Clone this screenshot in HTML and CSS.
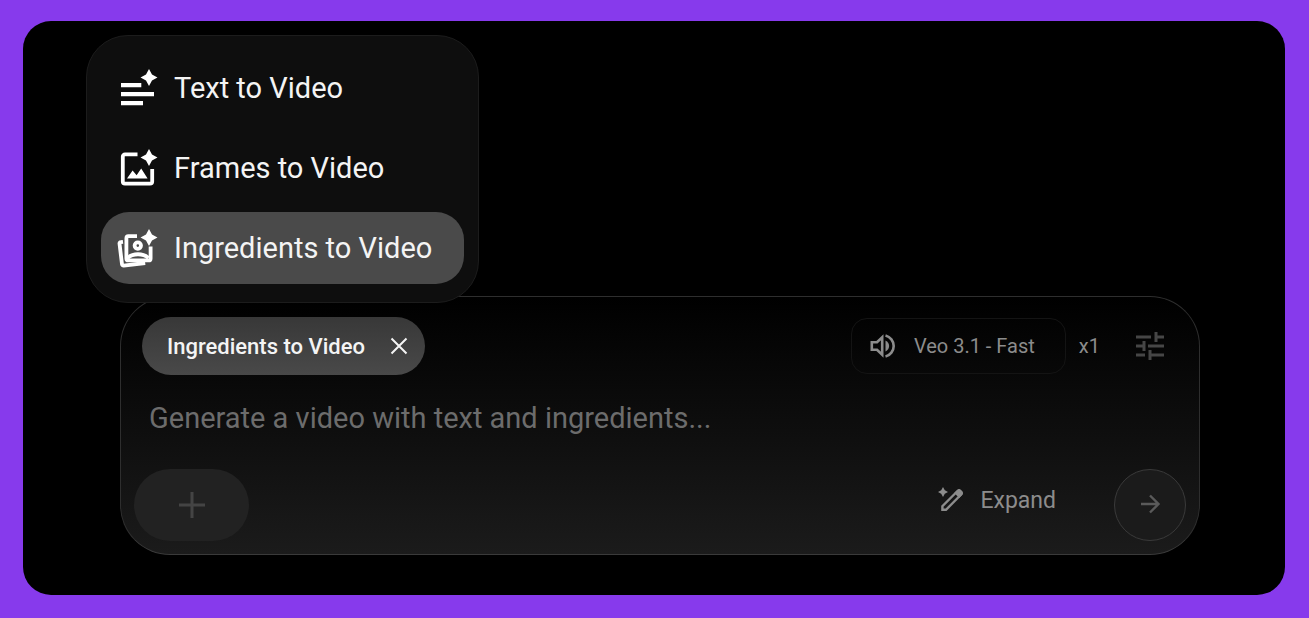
FILE: index.html
```
<!DOCTYPE html>
<html lang="en">
<head>
    <meta charset="utf-8">
    <meta name="viewport" content="width=device-width, initial-scale=1">
    <title>Ingredients to Video</title>
    <link rel="stylesheet" href="styles.css">
</head>
<body>
<main class="stage">
    <form class="composer">
        <!-- mode menu, opens over the top edge of the composer -->
        <div class="menu" role="menu">
            <button type="button" class="menu-item" role="menuitem">
                <svg class="menu-icon" viewBox="0 0 40 40" aria-hidden="true">
                    <path d="M4 15h20.300v4.200H4zM4 24h33v4.200H4zM4 33h22v4.200H4z"/>
                    <path d="M32 1l3 5.500 5.500 3-5.500 3L32 18l-3-5.500-5.500-3 5.500-3z"/>
                </svg>
                Text to Video
            </button>
            <button type="button" class="menu-item" role="menuitem">
                <svg class="menu-icon" viewBox="0 0 40 40" aria-hidden="true">
                    <path class="line" d="M20.500 6.400H8a2.200 2.200 0 0 0-2.200 2.200v24.800A2.200 2.200 0 0 0 8 35.600h25a2.200 2.200 0 0 0 2.200-2.200V21"/>
                    <path d="M10 30.400l5.600-8 4 4.800 4.600-6.600 6.400 9.800z"/>
                    <path d="M32 1l3 5.500 5.500 3-5.500 3L32 18l-3-5.500-5.500-3 5.500-3z"/>
                </svg>
                Frames to Video
            </button>
            <button type="button" class="menu-item selected" role="menuitem">
                <svg class="menu-icon" viewBox="0 0 40 40" aria-hidden="true">
                    <path class="line" d="M6 13.800l-2.400.3a1.200 1.200 0 0 0-1.100 1.400l2.500 20.800a1.500 1.500 0 0 0 1.700 1.300l21.500-2.600"/>
                    <path class="line" d="M20 8.200h-8.600a2 2 0 0 0-2 2v20.200a2 2 0 0 0 2 2h20.200a2 2 0 0 0 2-2V18.500"/>
                    <circle class="line" cx="20.800" cy="17.600" r="3.200"/>
                    <path class="line" d="M10.500 30c5.500-5 15.500-5 21 0"/>
                    <path d="M32 1l3 5.500 5.500 3-5.500 3L32 18l-3-5.500-5.500-3 5.500-3z"/>
                </svg>
                Ingredients to Video
            </button>
        </div>

        <div class="row top">
            <button type="button" class="chip">
                Ingredients to Video
                <svg class="close-icon" viewBox="0 0 18 18" aria-hidden="true"><path d="M1.500 1.500l15 15M16.500 1.500l-15 15"/></svg>
            </button>
            <div class="settings">
                <button type="button" class="model">
                    <svg class="sound-icon" viewBox="0 0 26 26" aria-hidden="true">
                        <path class="sound-line" d="M1.800 9.300h5.200l5.200-5v17.400l-5.200-5H1.800z"/>
                        <path d="M15.500 7.500c2.200 1 3.600 3.100 3.600 5.500s-1.400 4.500-3.600 5.500z"/>
                        <path class="sound-line" d="M15.500 2.400c4.800 1.300 8.200 5.700 8.200 10.600s-3.400 9.300-8.200 10.600"/>
                    </svg>
                    Veo 3.1 - Fast
                </button>
                <span class="count">x1</span>
                <button type="button" class="tune" aria-label="Settings">
                    <svg class="tune-icon" viewBox="0 0 28 28" aria-hidden="true">
                        <path d="M0 5h15M20 0v10M20 5h8M0 14h7M8 9v10M12 14h16M0 23h9M14 18v10M14 23h14"/>
                    </svg>
                </button>
            </div>
        </div>

        <input type="text" class="prompt" aria-label="Prompt" placeholder="Generate a video with text and ingredients...">

        <div class="row bottom">
            <button type="button" class="add" aria-label="Add ingredient">
                <svg class="add-icon" viewBox="0 0 26 26" aria-hidden="true"><path d="M13 0v26M0 13h26"/></svg>
            </button>
            <div class="actions">
                <button type="button" class="expand">
                    <svg class="pen-icon" viewBox="0 0 26 26" aria-hidden="true">
                        <path d="M5 0l1.800 3.200L10 5 6.800 6.800 5 10 3.200 6.800 0 5l3.200-1.800z"/>
                        <path class="pen-line" d="M4.400 22.800v-3.600L19.600 4a1.800 1.800 0 0 1 2.500 0l1 1a1.800 1.800 0 0 1 0 2.500L8 22.800z"/>
                        <path d="M16.200 6l3-3a2.800 2.800 0 0 1 3.800 0l1.200 1.200a2.800 2.800 0 0 1 0 3.800l-3 3z"/>
                    </svg>
                    Expand
                </button>
                <button type="submit" class="send" aria-label="Generate">
                    <svg class="send-icon" viewBox="0 0 20 20" aria-hidden="true"><path d="M1 9h17.500M10 .5L18.500 9 10 17.500"/></svg>
                </button>
            </div>
        </div>
    </form>
</main>
</body>
</html>
```
FILE: styles.css
```
* {
    box-sizing: border-box;
}

body {
    margin: 0;
    min-height: 100vh;
    padding: 21px 24px 23px 23px;
    display: flex;
    background-color: #873aec;
    font-family: Roboto, Arial, sans-serif;
}

button, input {
    margin: 0;
    padding: 0;
    border: none;
    background: none;
    color: inherit;
    font: inherit;
}

button {
    cursor: pointer;
}

svg {
    flex: none;
    fill: currentColor;
    overflow: visible;
}

.stage {
    flex: 1;
    display: flex;
    flex-direction: column;
    justify-content: flex-end;
    padding: 275px 85px 40px 97px;
    border-radius: 28px;
    background-color: #000;
}

.composer {
    position: relative;
    padding: 20px 13px 13px;
    border: 1px solid #2e2e2e;
    border-bottom-color: #3a3a3a;
    border-radius: 50px;
    background: linear-gradient(#000, #1b1b1b);
}

/* menu */
.menu {
    position: absolute;
    left: -35px;
    bottom: calc(100% - 6px);
    display: flex;
    flex-direction: column;
    gap: 8px;
    padding: 16px 14px 18px;
    border: 1px solid #1c1c1c;
    border-radius: 42px;
    background-color: #0e0e0e;
    color: #f4f4f4;
}

.menu-item {
    display: flex;
    align-items: center;
    gap: 17px;
    height: 72px;
    padding: 0 32px 0 16px;
    border-radius: 28px;
    font-size: 29px;
    white-space: nowrap;
}

.menu-item.selected {
    background-color: #4a4a4a;
}

.menu-icon {
    width: 40px;
    height: 40px;
    color: #fff;
}

.line {
    fill: none;
    stroke: currentColor;
    stroke-width: 3.8;
}

/* composer rows */
.row {
    display: flex;
    justify-content: space-between;
}

.top {
    align-items: center;
    padding: 0 22px 0 8px;
}

.chip {
    display: flex;
    align-items: center;
    gap: 25px;
    height: 58px;
    padding: 0 17px 0 25px;
    border-radius: 29px;
    background: linear-gradient(#383838, #494949);
    color: #f4f4f4;
    font-size: 22px;
    font-weight: 500;
}

.close-icon {
    width: 18px;
    height: 18px;
    fill: none;
    stroke: currentColor;
    stroke-width: 2;
}

.settings {
    display: flex;
    align-items: center;
    color: #8c8c8c;
    font-size: 20px;
}

.model {
    display: flex;
    align-items: center;
    gap: 18px;
    height: 56px;
    padding: 0 30px 0 18px;
    border: 1px solid #141414;
    border-radius: 16px;
}

.sound-icon {
    width: 26px;
    height: 26px;
}

.sound-line {
    fill: none;
    stroke: currentColor;
    stroke-width: 2.6;
}

.count {
    margin: 0 36px 0 13px;
}

.tune {
    display: flex;
    color: #464646;
}

.tune-icon {
    width: 28px;
    height: 28px;
    stroke: currentColor;
    stroke-width: 3;
}

.prompt {
    display: block;
    width: 100%;
    height: 40px;
    margin: 23px 0 31px;
    padding: 0 15px;
    color: #f4f4f4;
    font-size: 29px;
    outline: none;
}

.prompt::placeholder {
    color: #6c6c6c;
    opacity: 1;
}

.add {
    display: flex;
    align-items: center;
    justify-content: center;
    width: 115px;
    height: 72px;
    border-radius: 36px;
    background-color: #222;
    color: #444;
}

.add-icon {
    width: 26px;
    height: 26px;
    stroke: currentColor;
    stroke-width: 3;
}

.actions {
    display: flex;
    gap: 58px;
}

.expand {
    display: flex;
    align-items: center;
    gap: 16px;
    height: 62px;
    color: #8c8c8c;
    font-size: 23px;
}

.pen-icon {
    width: 26px;
    height: 26px;
}

.pen-line {
    fill: none;
    stroke: currentColor;
    stroke-width: 2.4;
}

.send {
    display: flex;
    align-items: center;
    justify-content: center;
    width: 72px;
    height: 72px;
    border: 1px solid #3a3a3a;
    border-radius: 50%;
    background-color: #1b1b1b;
    color: #5a5a5a;
}

.send-icon {
    width: 20px;
    height: 20px;
    fill: none;
    stroke: currentColor;
    stroke-width: 2.4;
}
```
